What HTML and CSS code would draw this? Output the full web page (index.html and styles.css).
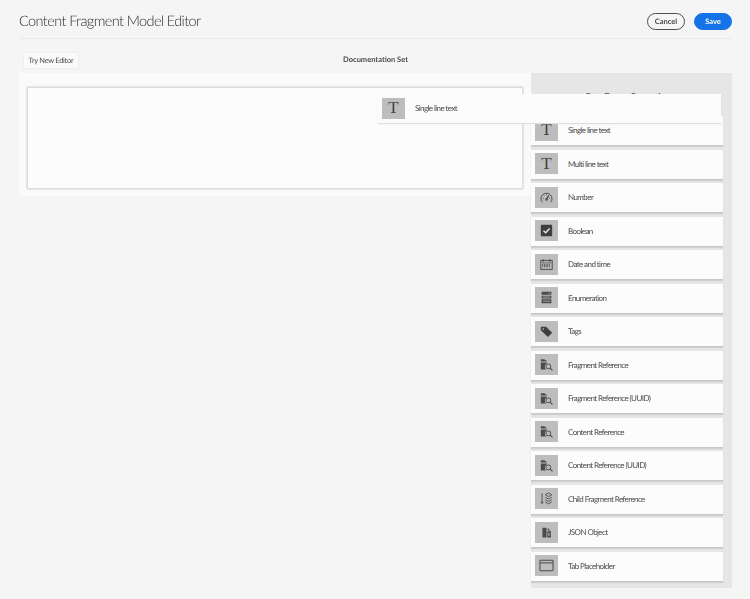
FILE: index.html
```html
<!DOCTYPE html>
<html lang="en">
<head>
<meta charset="utf-8">
<title>Content Fragment Model Editor</title>
<link rel="stylesheet" href="styles.css">
</head>
<body>
<svg class="defs" width="0" height="0" aria-hidden="true">
  <defs>
    <symbol id="i-folder" viewBox="0 0 16 16">
      <path d="M1 1.500h4.500l1 1.300H8v1.600H1z M1 5.500h7.500v.9C6.900 7.400 6 8.900 6 10.500c0 1.600.6 2.800 1.600 3.700H1z" fill="#4b4b4b"/>
      <circle cx="10.300" cy="10.300" r="3" fill="none" stroke="#4b4b4b" stroke-width="1.200"/>
      <path d="M12.500 12.500l2.800 2.800" stroke="#4b4b4b" stroke-width="1.500"/>
    </symbol>
  </defs>
</svg>
<div class="page">
  <header class="topbar">
    <h1 class="title">Content Fragment Model Editor</h1>
    <div class="actions">
      <button class="btn btn-cancel">Cancel</button>
      <button class="btn btn-save">Save</button>
    </div>
  </header>
  <div class="subbar">
    <button class="try">Try New Editor</button>
    <div class="set-name">Documentation Set</div>
  </div>
  <main class="workspace">
    <section class="canvas-wrap">
      <div class="canvas"></div>
    </section>
    <aside class="sidebar">
      <div class="side-title">Data Types &nbsp; Properties</div>
      <ul class="list">
        <li class="item"><span class="ico"><span class="glyph-t">T</span></span><span class="label">Single line text</span></li>
        <li class="item"><span class="ico"><span class="glyph-t">T</span></span><span class="label">Multi line text</span></li>
        <li class="item"><span class="ico"><svg viewBox="0 0 16 16" class="svg"><path d="M2.700 13.800A6.800 6.800 0 1 1 13.300 13.800" fill="none" stroke="#4b4b4b" stroke-width="1.200"/><path d="M8 10L10.800 5.500" stroke="#4b4b4b" stroke-width="1.700"/><circle cx="8" cy="10.500" r="1.500" fill="#4b4b4b"/><path d="M3.500 9h1.200M11.300 9h1.200M5 5.300l.8.800M8 3.800v1.200" stroke="#4b4b4b" stroke-width="1"/></svg></span><span class="label">Number</span></li>
        <li class="item"><span class="ico"><svg viewBox="0 0 16 16" class="svg"><rect x="1" y="1" width="14" height="14" rx="1" fill="#3f3f3f"/><path d="M4.300 8.200l2.700 2.500 4.800-5.200" fill="none" stroke="#e8e8e8" stroke-width="1.800"/></svg></span><span class="label">Boolean</span></li>
        <li class="item"><span class="ico"><svg viewBox="0 0 16 16" class="svg"><rect x="1" y="3" width="14" height="11" fill="none" stroke="#4b4b4b" stroke-width="1.200"/><path d="M4 1.500v3M12 1.500v3" stroke="#4b4b4b" stroke-width="1.300"/><path d="M2.500 6h11" stroke="#4b4b4b" stroke-width="1"/><path d="M3 9.500h10" stroke="#4b4b4b" stroke-width="4" stroke-dasharray="1 1"/></svg></span><span class="label">Date and time</span></li>
        <li class="item"><span class="ico"><svg viewBox="0 0 16 16" class="svg"><path d="M2 1h12v3.600H2zM2 5.800h12v3.300H2zM2 10.300h12V15H2z" fill="#4b4b4b"/><path d="M10.500 2.800h2M3.500 7.400h9M3.500 12.500h9" stroke="#bdbdbd" stroke-width=".9"/></svg></span><span class="label">Enumeration</span></li>
        <li class="item"><span class="ico"><svg viewBox="0 0 16 16" class="svg"><path d="M1 2h6.500l7.500 7.500-5.200 5.200L1 6.500z" fill="#3f3f3f"/><circle cx="4" cy="5" r="1" fill="#bdbdbd"/></svg></span><span class="label">Tags</span></li>
        <li class="item"><span class="ico"><svg class="svg"><use href="#i-folder"/></svg></span><span class="label">Fragment Reference</span></li>
        <li class="item"><span class="ico"><svg class="svg"><use href="#i-folder"/></svg></span><span class="label">Fragment Reference (UUID)</span></li>
        <li class="item"><span class="ico"><svg class="svg"><use href="#i-folder"/></svg></span><span class="label">Content Reference</span></li>
        <li class="item"><span class="ico"><svg class="svg"><use href="#i-folder"/></svg></span><span class="label">Content Reference (UUID)</span></li>
        <li class="item"><span class="ico"><svg viewBox="0 0 16 16" class="svg"><path d="M2.500 1.500v12.500M1 12l1.500 2.200L4 12" fill="none" stroke="#4b4b4b" stroke-width="1.100"/><path d="M10.500 1l4 2.300-4 2.300-4-2.300zM6.500 6.300l4 2.300 4-2.300M6.500 9.300l4 2.300 4-2.300M6.500 12.300l4 2.300 4-2.300" fill="none" stroke="#4b4b4b" stroke-width="1.100"/></svg></span><span class="label">Child Fragment Reference</span></li>
        <li class="item"><span class="ico"><svg viewBox="0 0 16 16" class="svg"><path d="M3 2h5v12H3zM9 6.500h4.500V14H9zM9.500 2.500l3.500 3H9.500z" fill="#4b4b4b"/><path d="M10.500 8.500v3.500M12 8.500v3.500" stroke="#bdbdbd" stroke-width=".8"/></svg></span><span class="label">JSON Object</span></li>
        <li class="item"><span class="ico"><svg viewBox="0 0 16 16" class="svg svg-wide"><rect x="1" y="2.500" width="14" height="11" rx=".6" fill="none" stroke="#4b4b4b" stroke-width="1.100"/><path d="M1 5.200h14" stroke="#4b4b4b" stroke-width="1.100"/></svg></span><span class="label">Tab Placeholder</span></li>
      </ul>
    </aside>
  </main>
  <div class="item drag"><span class="ico"><span class="glyph-t">T</span></span><span class="label">Single line text</span></div>
</div>
</body>
</html>
```

FILE: styles.css
```css
* { box-sizing: border-box; }
html, body { margin: 0; height: 100%; }
body {
  background: #f5f5f5;
  color: #4b4b4b;
  font-family: Lato, "Noto Sans", sans-serif;
  text-rendering: geometricPrecision;
  overflow: hidden;
}
.defs { position: absolute; }
.page { position: relative; height: 599px; padding: 0 18px 0 19px; filter: blur(.3px); }
.topbar {
  display: flex;
  justify-content: space-between;
  align-items: center;
  height: 39px;
  padding-top: 5px;
  border-bottom: 1px solid #eaeaea;
}
.title { margin: 0; font-size: 14.500px; font-weight: 300; letter-spacing: -.6px; color: #2c2c2c; }
.actions { display: flex; gap: 9px; }
.btn {
  font: 700 7.500px Lato, sans-serif;
  text-rendering: geometricPrecision;
  width: 38px;
  height: 17px;
  padding: 0;
  border-radius: 9px;
}
.btn-cancel { background: #f5f5f5; border: 1px solid #4b4b4b; color: #4b4b4b; }
.btn-save { background: #1473e6; border: 1px solid #1473e6; color: #fff; }
.subbar {
  position: relative;
  display: flex;
  align-items: center;
  height: 34px;
  padding: 8px 0 0 4px;
}
.try {
  font: 400 7.500px Lato, sans-serif;
  text-rendering: geometricPrecision;
  letter-spacing: -.3px;
  color: #4b4b4b;
  width: 56px;
  height: 17px;
  padding: 0;
  white-space: nowrap;
  background: #fafafa;
  border: 1px solid #eeeeee;
  border-radius: 2px;
}
.set-name {
  position: absolute;
  left: 0;
  right: 0;
  top: 16px;
  text-align: center;
  font-size: 7.500px;
  font-weight: 700;
}
.workspace { display: flex; align-items: flex-start; }
.canvas-wrap { width: 512px; height: 123px; padding: 14px 8px 0; background: #fafafa; }
.canvas {
  width: 496px;
  height: 102px;
  background: #fcfcfc;
  border: 1px solid #dcdcdc;
  box-shadow: 0 0 2px #c4c4c4;
}
.sidebar { position: relative; width: 201px; height: 515px; background: #e6e6e6; padding-top: 43px; }
.side-title {
  position: absolute;
  top: 18px;
  left: 0;
  right: 9px;
  text-align: center;
  font-size: 8px;
  font-weight: 700;
}
.list { list-style: none; margin: 0; padding: 0; display: flex; flex-direction: column; gap: 3.500px; width: 192px; }
.item {
  display: flex;
  align-items: center;
  gap: 10px;
  height: 30px;
  padding: 0 0 1px 4px;
  background: #fcfcfc;
  border-bottom: 1px solid #c8c8c8;
  box-shadow: 0 1px 1px #d0d0d0;
}
.drag {
  position: absolute;
  left: 378px;
  top: 94px;
  width: 343px;
  height: 29px;
  border-bottom: 0;
  box-shadow: 0 1px 1px #dddddd;
}
.ico {
  flex: none;
  display: flex;
  align-items: center;
  justify-content: center;
  width: 23px;
  height: 21px;
  background: #bdbdbd;
}
.svg { width: 13px; height: 13px; }
.svg-wide { width: 15px; height: 15px; }
.glyph-t { font: 400 17px "Liberation Serif", serif; color: #3f3f3f; }
.label { font-size: 8px; letter-spacing: -.58px; color: #4b4b4b; }
```
